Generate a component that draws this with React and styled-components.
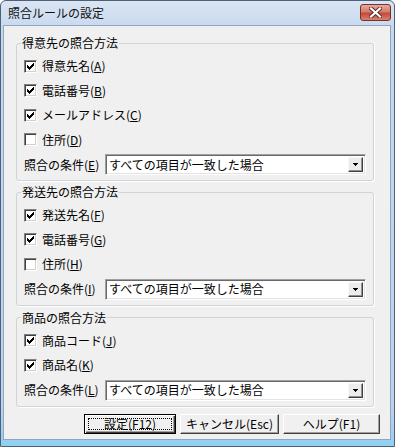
import styled, { createGlobalStyle } from "styled-components";

const Global = createGlobalStyle`
  html, body { margin: 0; padding: 0; background: #fff; }
  body {
    font-family: "Noto Sans CJK JP", "Noto Sans", sans-serif;
    font-size: 12px;
    color: #000;
  }
`;

const Window = styled.div`
  width: 395px;
  height: 447px;
  box-sizing: border-box;
  border: 1px solid #4f6079;
  border-radius: 6px 6px 0 0;
  background: linear-gradient(#dae5f3, #c6d8ee 30px, #bcd1eb 92%, #8fd0f2);
  display: flex;
  flex-direction: column;
  padding: 0 3px 6px 2px;
`;

const TitleBar = styled.div`
  height: 24px;
  display: flex;
  align-items: flex-start;
  justify-content: space-between;
  padding-left: 5px;
`;

const Title = styled.span`
  line-height: 24px;
  font-size: 12px;
  color: #111;
`;

const CloseButton = styled.div`
  width: 31px;
  height: 17px;
  margin-top: 3px;
  box-sizing: border-box;
  border: 1px solid #7a2f27;
  border-radius: 3px;
  background: linear-gradient(#e6aa9f, #d47b6c 45%, #c44a3a 55%, #d8826f);
  display: flex;
  align-items: center;
  justify-content: center;
`;

const Client = styled.div`
  flex: 1;
  background: #f0f0f0;
  border: 1px solid #8fa5c2;
  padding: 11px 10px 0 12px;
  display: flex;
  flex-direction: column;
`;

const Group = styled.fieldset`
  margin: ${({ $top }) => $top}px 6px 0 0;
  padding: 5px 7px 3px 7px;
  border: 1px solid #cfd4d9;
  border-radius: 3px;
  box-shadow: 1px 1px 0 #fff;
  min-inline-size: 0;
`;

const Legend = styled.legend`
  padding: 0 1px;
  margin-left: -3px;
  line-height: 12px;
  font-size: 12px;
`;

const CheckRow = styled.label`
  display: flex;
  align-items: center;
  gap: 5px;
  height: 24.5px;
  line-height: 12px;
`;

const Box = styled.span`
  width: 13px;
  height: 13px;
  box-sizing: border-box;
  border: 1px solid;
  border-color: #808080 #fff #fff #808080;
  box-shadow: inset 1px 1px 0 #404040, inset -1px -1px 0 #d4d0c8;
  background: #fff;
  display: flex;
  align-items: center;
  justify-content: center;
`;

const ConditionRow = styled.div`
  display: flex;
  align-items: center;
  height: 25px;
`;

const ConditionLabel = styled.span`
  width: 81px;
  flex-shrink: 0;
  line-height: 12px;
  white-space: nowrap;
`;

const Combo = styled.div`
  flex: 1;
  height: 21px;
  box-sizing: border-box;
  border: 1px solid;
  border-color: #a0a0a0 #fff #fff #a0a0a0;
  box-shadow: inset 1px 1px 0 #696969, inset -1px -1px 0 #e3e3e3;
  background: #fff;
  display: flex;
  align-items: center;
  justify-content: space-between;
  padding: 0 2px 0 3px;
`;

const ComboText = styled.span`
  line-height: 12px;
`;

const ArrowButton = styled.span`
  width: 15px;
  height: 15px;
  box-sizing: border-box;
  border: 1px solid;
  border-color: #f8f8f8 #404040 #404040 #f8f8f8;
  box-shadow: inset -1px -1px 0 #909090;
  background: #ececec;
  display: flex;
  align-items: center;
  justify-content: center;
`;

const ButtonRow = styled.div`
  display: flex;
  justify-content: flex-end;
  gap: 4px;
  margin-top: 7px;
`;

const Button = styled.div`
  position: relative;
  width: ${({ $w }) => $w}px;
  height: 20px;
  box-sizing: border-box;
  border: 1px solid;
  border-color: ${({ $default }) =>
    $default ? "#000" : "#fff #404040 #404040 #fff"};
  box-shadow: ${({ $default }) =>
    $default
      ? "inset 1px 1px 0 #fff, inset -1px -1px 0 #404040, inset -2px -2px 0 #a0a0a0"
      : "inset -1px -1px 0 #a0a0a0"};
  background: #f0f0f0;
  display: flex;
  align-items: center;
  justify-content: center;
  line-height: 12px;

  &::after {
    content: "";
    display: ${({ $default }) => ($default ? "block" : "none")};
    position: absolute;
    inset: 3px;
    border: 1px dotted #000;
  }
`;

function Check({ checked }) {
  return (
    <Box>
      {checked && (
        <svg width="7" height="7" viewBox="0 0 7 7" shapeRendering="crispEdges">
          <path
            d="M6 0h1v3h-1v1h-1v1h-1v1h-1v1h-1v-1h-1v-1h-1v-3h1v1h1v1h1v-1h1v-1h1z"
            fill="#000"
          />
        </svg>
      )}
    </Box>
  );
}

function Item({ label, keyChar, checked }) {
  return (
    <CheckRow>
      <Check checked={checked} />
      <span>
        {label}(<u>{keyChar}</u>)
      </span>
    </CheckRow>
  );
}

function Condition({ keyChar }) {
  return (
    <ConditionRow>
      <ConditionLabel>
        照合の条件(<u>{keyChar}</u>)
      </ConditionLabel>
      <Combo>
        <ComboText>すべての項目が一致した場合</ComboText>
        <ArrowButton>
          <svg width="5" height="3" viewBox="0 0 5 3" shapeRendering="crispEdges">
            <path d="M0 0h5v1h-1v1h-1v1h-1v-1h-1v-1h-1z" fill="#000" />
          </svg>
        </ArrowButton>
      </Combo>
    </ConditionRow>
  );
}

const groups = [
  {
    title: "得意先の照合方法",
    top: 0,
    items: [
      ["得意先名", "A", true],
      ["電話番号", "B", true],
      ["メールアドレス", "C", true],
      ["住所", "D", false],
    ],
    cond: "E",
  },
  {
    title: "発送先の照合方法",
    top: 5,
    items: [
      ["発送先名", "F", true],
      ["電話番号", "G", true],
      ["住所", "H", false],
    ],
    cond: "I",
  },
  {
    title: "商品の照合方法",
    top: 6,
    items: [
      ["商品コード", "J", true],
      ["商品名", "K", true],
    ],
    cond: "L",
  },
];

export default function App() {
  return (
    <>
      <Global />
      <Window>
        <TitleBar>
          <Title>照合ルールの設定</Title>
          <CloseButton>
            <svg width="13" height="11" viewBox="0 0 13 11">
              <path
                d="M2 1.5L11 9.5M11 1.5L2 9.5"
                stroke="#5a2a26"
                strokeWidth="4"
                strokeLinecap="square"
              />
              <path
                d="M2 1.5L11 9.5M11 1.5L2 9.5"
                stroke="#fff"
                strokeWidth="2.2"
                strokeLinecap="square"
              />
            </svg>
          </CloseButton>
        </TitleBar>
        <Client>
          {groups.map((g) => (
            <Group key={g.title} $top={g.top}>
              <Legend>{g.title}</Legend>
              {g.items.map(([label, k, checked]) => (
                <Item key={k} label={label} keyChar={k} checked={checked} />
              ))}
              <Condition keyChar={g.cond} />
            </Group>
          ))}
          <ButtonRow>
            <Button $w={92} $default>
              設定(F12)
            </Button>
            <Button $w={99}>キャンセル(Esc)</Button>
            <Button $w={97}>ヘルプ(F1)</Button>
          </ButtonRow>
        </Client>
      </Window>
    </>
  );
}
